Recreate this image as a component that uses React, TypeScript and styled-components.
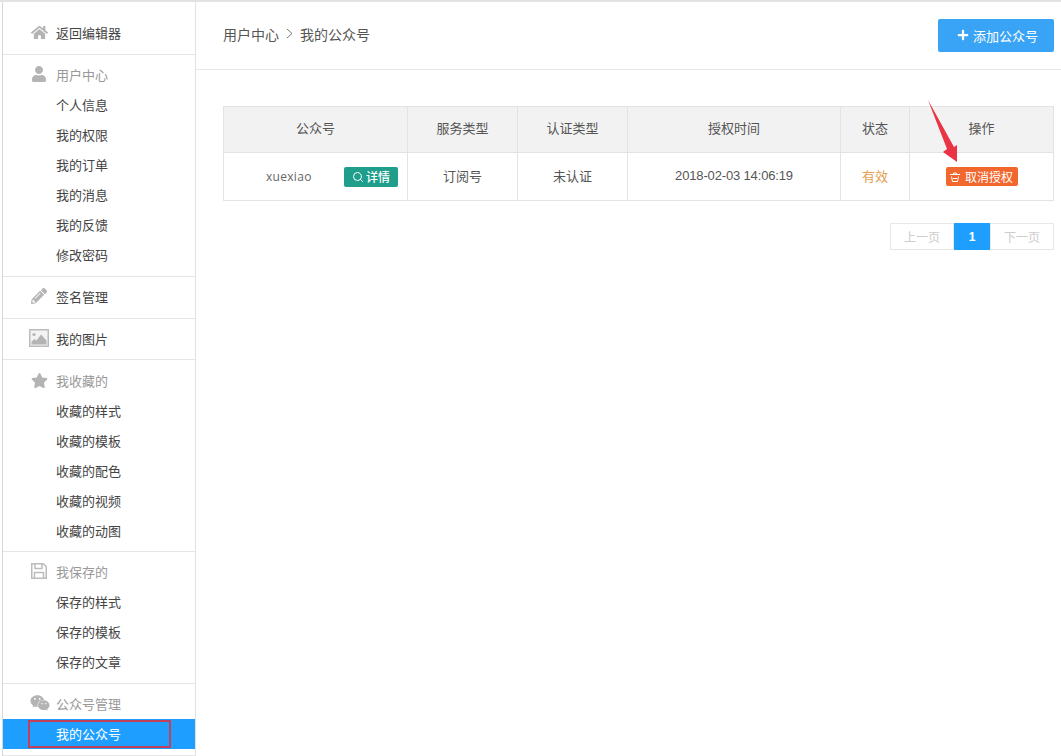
import styled, { createGlobalStyle } from 'styled-components';
import { FaHome, FaUser, FaPencilAlt, FaStar, FaWeixin, FaPlus } from 'react-icons/fa';
import { Search } from 'lucide-react';
import type { ReactNode } from 'react';

const GlobalStyle = createGlobalStyle`
  html, body {
    margin: 0;
    background: #fff;
  }
  body {
    font-family: "Liberation Sans", "Noto Sans CJK SC", sans-serif;
    font-size: 13px;
    color: #444;
  }
`;

const Page = styled.div`
  display: flex;
  width: 1061px;
  height: 756px;
  box-sizing: border-box;
  padding-left: 2px;
  border-top: 2px solid #e2e2e2;
  overflow: hidden;
`;

const Sidebar = styled.nav`
  width: 194px;
  flex: none;
  box-sizing: border-box;
  border-left: 1px solid #d8d8d8;
  border-right: 1px solid #e2e2e2;
`;

const Section = styled.div<{ $top?: number; $bottom?: number }>`
  padding: ${(p) => p.$top ?? 5}px 0 ${(p) => p.$bottom ?? 6}px;
  border-bottom: 1px solid #e6e6e6;
`;

const Row = styled.div<{ $muted?: boolean; $active?: boolean }>`
  position: relative;
  display: flex;
  align-items: center;
  height: 30px;
  box-sizing: border-box;
  padding: 0 0 2px 53px;
  color: ${(p) => (p.$active ? '#fff' : p.$muted ? '#999' : '#444')};
  background: ${(p) => (p.$active ? '#1e9fff' : 'transparent')};
`;

const IconSlot = styled.span<{ $size?: number; $shift?: number }>`
  position: absolute;
  left: ${(p) => 26 + (p.$shift ?? 0)}px;
  top: -1px;
  width: 20px;
  height: 30px;
  display: flex;
  align-items: center;
  justify-content: center;
  color: #b4b4b4;
  font-size: ${(p) => p.$size ?? 17}px;
`;

const Marker = styled.span`
  position: absolute;
  left: 25px;
  top: 1px;
  width: 139px;
  height: 24px;
  border: 2px solid #c2405a;
`;

const Main = styled.main`
  flex: 1;
  min-width: 0;
`;

const Header = styled.header`
  display: flex;
  align-items: center;
  justify-content: space-between;
  height: 68px;
  box-sizing: border-box;
  padding: 0 0 0 27px;
  border-bottom: 1px solid #e8e8e8;
`;

const Crumbs = styled.div`
  display: flex;
  align-items: center;
  gap: 7px;
  margin-top: -4px;
  color: #555;
  font-size: 14px;
`;

const Chevron = styled.svg`
  width: 7px;
  height: 11px;
`;

const AddButton = styled.button`
  display: flex;
  align-items: center;
  justify-content: center;
  gap: 4px;
  width: 116px;
  height: 33px;
  margin: 0 7px 0 0;
  padding: 0 0 1px 3px;
  border: 0;
  border-radius: 2px;
  background: #39a3f5;
  color: #fff;
  font: inherit;
  font-size: 13px;
`;

const Content = styled.div`
  padding: 36px 7px 0 27px;
`;

const TableWrap = styled.div`
  position: relative;
`;

const Table = styled.table`
  width: 830px;
  table-layout: fixed;
  border-collapse: collapse;
  text-align: center;
`;

const Th = styled.th<{ $width: number }>`
  width: ${(p) => p.$width}px;
  height: 46px;
  box-sizing: border-box;
  padding: 0 0 4px;
  border: 1px solid #e4e2e6;
  background: #f2f2f2;
  color: #555;
  font-weight: 400;
`;

const Td = styled.td`
  height: 48px;
  box-sizing: border-box;
  padding: 0 0 2px;
  border: 1px solid #e4e2e6;
  color: #555;
`;

const NameCell = styled.div`
  display: flex;
  align-items: center;
  justify-content: space-between;
  padding: 2px 9px 0 42px;
`;

const Name = styled.span`
  font-family: "Open Sans", "Liberation Sans", sans-serif;
  font-size: 12px;
  letter-spacing: 0.3px;
  color: #666;
`;

const Stamp = styled.span`
  letter-spacing: -0.15px;
`;

const Tag = styled.span<{ $bg: string }>`
  display: inline-flex;
  align-items: center;
  justify-content: center;
  gap: 2px;
  height: 20px;
  box-sizing: border-box;
  border-radius: 2px;
  background: ${(p) => p.$bg};
  color: #fff;
  font-size: 12px;
`;

const DetailTag = styled(Tag)`
  width: 54px;
  font-weight: 500;
`;

const RevokeTag = styled(Tag)`
  width: 72px;
  height: 19px;
  margin-top: 2px;
  gap: 5px;
`;

const Status = styled.span`
  color: #e0a050;
`;

const Arrow = styled.svg`
  position: absolute;
  left: 704px;
  top: -6px;
  width: 32px;
  height: 64px;
`;

const Pager = styled.div`
  display: flex;
  justify-content: flex-end;
  margin-top: 22px;
`;

const PageItem = styled.span<{ $current?: boolean }>`
  display: flex;
  align-items: center;
  justify-content: center;
  width: ${(p) => (p.$current ? 36 : 64)}px;
  height: 27px;
  box-sizing: border-box;
  border: 1px solid ${(p) => (p.$current ? '#1e9fff' : '#e8e8e8')};
  background: ${(p) => (p.$current ? '#1e9fff' : '#fff')};
  color: ${(p) => (p.$current ? '#fff' : '#ccc')};
  font-size: 12px;
  font-weight: ${(p) => (p.$current ? 700 : 400)};
`;

const PictureIcon = () => (
  <svg width="20" height="18" viewBox="0 0 20 18">
    <rect x="0.75" y="0.75" width="18.5" height="16.5" fill="#f3f3f3" stroke="#bcbcbc" strokeWidth="1.5" />
    <circle cx="5" cy="5.5" r="1.6" fill="#b4b4b4" />
    <path d="M2.5 15.5v-3l3-2.5 2 1.5 4.5-6 5.5 6v4z" fill="#b4b4b4" />
  </svg>
);

const FloppyIcon = () => (
  <svg width="16" height="16" viewBox="0 0 16 16" fill="none" stroke="#bcbcbc" strokeWidth="1.5">
    <path d="M.75.75h11.5l3 3v11.5H.75z" />
    <path d="M4 1v4.5h7V1" />
    <path d="M3.5 15v-5.5h9V15" />
  </svg>
);

const BinIcon = () => (
  <svg width="10" height="10" viewBox="0 0 10 10" fill="none" stroke="#fff" strokeWidth="1">
    <path d="M0 2.5h10" />
    <path d="M3.5 2.5V1h3v1.5" />
    <path d="M1.5 4.5l1 5h5l1-5" />
    <path d="M3 6.5h4" />
  </svg>
);

type NavGroup = {
  icon: ReactNode;
  iconSize?: number;
  title: string;
  muted?: boolean;
  items?: string[];
  top?: number;
  bottom?: number;
};

const groups: NavGroup[] = [
  { icon: <FaHome />, title: '返回编辑器', top: 16 },
  {
    icon: <FaUser />,
    iconSize: 16,
    title: '用户中心',
    muted: true,
    items: ['个人信息', '我的权限', '我的订单', '我的消息', '我的反馈', '修改密码'],
  },
  { icon: <FaPencilAlt />, iconSize: 16, title: '签名管理' },
  { icon: <PictureIcon />, title: '我的图片', bottom: 5 },
  {
    icon: <FaStar />,
    title: '我收藏的',
    muted: true,
    top: 6,
    bottom: 5,
    items: ['收藏的样式', '收藏的模板', '收藏的配色', '收藏的视频', '收藏的动图'],
  },
  {
    icon: <FloppyIcon />,
    title: '我保存的',
    muted: true,
    items: ['保存的样式', '保存的模板', '保存的文章'],
  },
];

const App = () => (
  <>
    <GlobalStyle />
    <Page>
      <Sidebar>
        {groups.map((g) => (
          <Section key={g.title} $top={g.top} $bottom={g.bottom}>
            <Row $muted={g.muted}>
              <IconSlot $size={g.iconSize}>{g.icon}</IconSlot>
              {g.title}
            </Row>
            {g.items?.map((item) => <Row key={item}>{item}</Row>)}
          </Section>
        ))}
        <Section>
          <Row $muted>
            <IconSlot $size={22} $shift={1}>
              <FaWeixin />
            </IconSlot>
            公众号管理
          </Row>
          <Row $active>
            <Marker />
            我的公众号
          </Row>
        </Section>
      </Sidebar>
      <Main>
        <Header>
          <Crumbs>
            用户中心
            <Chevron viewBox="0 0 7 11">
              <path d="M1 1l5 4.5L1 10" fill="none" stroke="#777" strokeWidth="1" />
            </Chevron>
            我的公众号
          </Crumbs>
          <AddButton>
            <FaPlus size={12} />
            添加公众号
          </AddButton>
        </Header>
        <Content>
          <TableWrap>
            <Table>
              <thead>
                <tr>
                  <Th $width={184}>公众号</Th>
                  <Th $width={110}>服务类型</Th>
                  <Th $width={110}>认证类型</Th>
                  <Th $width={213}>授权时间</Th>
                  <Th $width={69}>状态</Th>
                  <Th $width={144}>操作</Th>
                </tr>
              </thead>
              <tbody>
                <tr>
                  <Td>
                    <NameCell>
                      <Name>xuexiao</Name>
                      <DetailTag $bg="#1f9e8c">
                        <Search size={12} strokeWidth={2} />
                        详情
                      </DetailTag>
                    </NameCell>
                  </Td>
                  <Td>订阅号</Td>
                  <Td>未认证</Td>
                  <Td>
                    <Stamp>2018-02-03 14:06:19</Stamp>
                  </Td>
                  <Td>
                    <Status>有效</Status>
                  </Td>
                  <Td>
                    <RevokeTag $bg="#f2672e">
                      <BinIcon />
                      取消授权
                    </RevokeTag>
                  </Td>
                </tr>
              </tbody>
            </Table>
            <Arrow viewBox="0 0 32 64">
              <path d="M1 0L27 47l3-2v17L16 52l4-3z" fill="#ea3345" />
            </Arrow>
          </TableWrap>
          <Pager>
            <PageItem>上一页</PageItem>
            <PageItem $current>1</PageItem>
            <PageItem>下一页</PageItem>
          </Pager>
        </Content>
      </Main>
    </Page>
  </>
);

export default App;
